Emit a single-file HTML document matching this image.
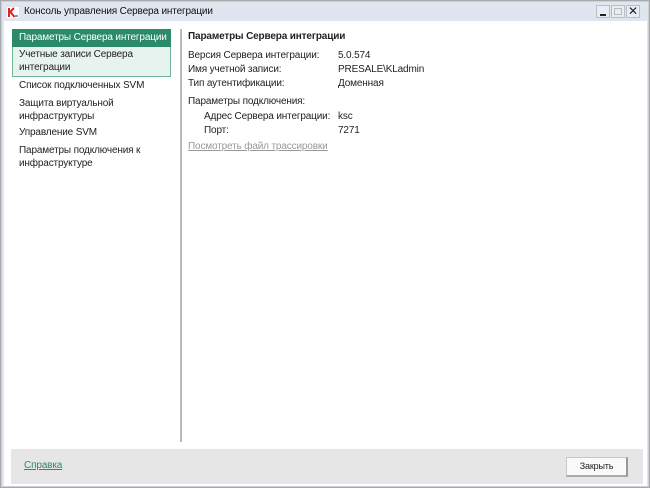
<!DOCTYPE html>
<html><head><meta charset="utf-8"><style>
*{margin:0;padding:0;box-sizing:border-box}
body{width:650px;height:488px;background:#a9a9a9;font-family:"Liberation Sans","DejaVu Sans",sans-serif;font-size:10px;letter-spacing:-0.15px;color:#222;position:relative;overflow:hidden}
.win{position:absolute;left:1px;top:1px;width:648px;height:486px;background:#dfe6ef;border:1px solid #c8d0da}
.title{position:absolute;left:22px;top:4px;font-size:10px;color:#111}
.main{position:absolute;left:2px;top:19px;width:643px;height:465px;background:#fff}
.abs{position:absolute;white-space:nowrap}
.sel{position:absolute;left:8px;top:8px;width:159px;height:18px;background:#2a8a6a;color:#fff;padding:3px 0 0 7px}
.hov{position:absolute;left:8px;top:26px;width:159px;height:30px;background:#e7f3ee;border:1px solid #6fb59b;border-top:none}
.div{position:absolute;left:176px;top:8px;width:2px;height:413px;background:#b9b9b9}
.foot{position:absolute;left:7px;top:428px;width:632px;height:35px;background:#e6e6e6}
.btn{position:absolute;left:555px;top:8px;width:62px;height:20px;background:#fafafa;border:1px solid #c8c8c8;border-right:2px solid #999;border-bottom:2px solid #aaa;font-size:9px;text-align:center;line-height:17px}
.tb{position:absolute;top:3px;width:14px;height:13px;background:#e8edf3;border:1px solid #b5bec9}
</style></head><body>
<div class="win">
<svg viewBox="0 0 12 11" width="12" height="11" style="position:absolute;left:5px;top:5px"><rect width="12" height="11" fill="#fff"/><path d="M2 1v9M2 6l5-5M3.5 5l4 5" stroke="#d22" stroke-width="2" fill="none"/><path d="M8 9h3" stroke="#2a8a6a" stroke-width="1.5"/></svg>
<div class="title">Консоль управления Сервера интеграции</div>
<div class="tb" style="left:594px"><div style="position:absolute;left:3px;top:8px;width:6px;height:2px;background:#222"></div></div>
<div class="tb" style="left:609px"><div style="position:absolute;left:2px;top:2px;width:8px;height:7px;border:1px solid #bbb"></div></div>
<div class="tb" style="left:624px;font-size:12px;font-weight:bold;text-align:center;line-height:11px">✕</div>
<div class="main">
<div class="sel">Параметры Сервера интеграции</div>
<div class="hov"></div>
<div class="abs" style="left:15px;top:27px;line-height:13px">Учетные записи Сервера<br>интеграции</div>
<div class="abs" style="left:15px;top:59px">Список подключенных SVM</div>
<div class="abs" style="left:15px;top:76px;line-height:13px">Защита виртуальной<br>инфраструктуры</div>
<div class="abs" style="left:15px;top:106px">Управление SVM</div>
<div class="abs" style="left:15px;top:123px;line-height:13px">Параметры подключения к<br>инфраструктуре</div>
<div class="div"></div>
<div class="abs" style="left:184px;top:10px;font-weight:bold">Параметры Сервера интеграции</div>
<div class="abs" style="left:184px;top:29px">Версия Сервера интеграции:</div>
<div class="abs" style="left:334px;top:29px">5.0.574</div>
<div class="abs" style="left:184px;top:43px">Имя учетной записи:</div>
<div class="abs" style="left:334px;top:43px">PRESALE\KLadmin</div>
<div class="abs" style="left:184px;top:57px">Тип аутентификации:</div>
<div class="abs" style="left:334px;top:57px">Доменная</div>
<div class="abs" style="left:184px;top:75px">Параметры подключения:</div>
<div class="abs" style="left:200px;top:90px">Адрес Сервера интеграции:</div>
<div class="abs" style="left:334px;top:90px">ksc</div>
<div class="abs" style="left:200px;top:104px">Порт:</div>
<div class="abs" style="left:334px;top:104px">7271</div>
<div class="abs" style="left:184px;top:120px;color:#999;text-decoration:underline">Посмотреть файл трассировки</div>
<div class="foot">
<div class="abs" style="left:13px;top:11px;color:#2a8a6a;text-decoration:underline">Справка</div>
<div class="btn">Закрыть</div>
</div>
</div>
</div>
</body></html>
